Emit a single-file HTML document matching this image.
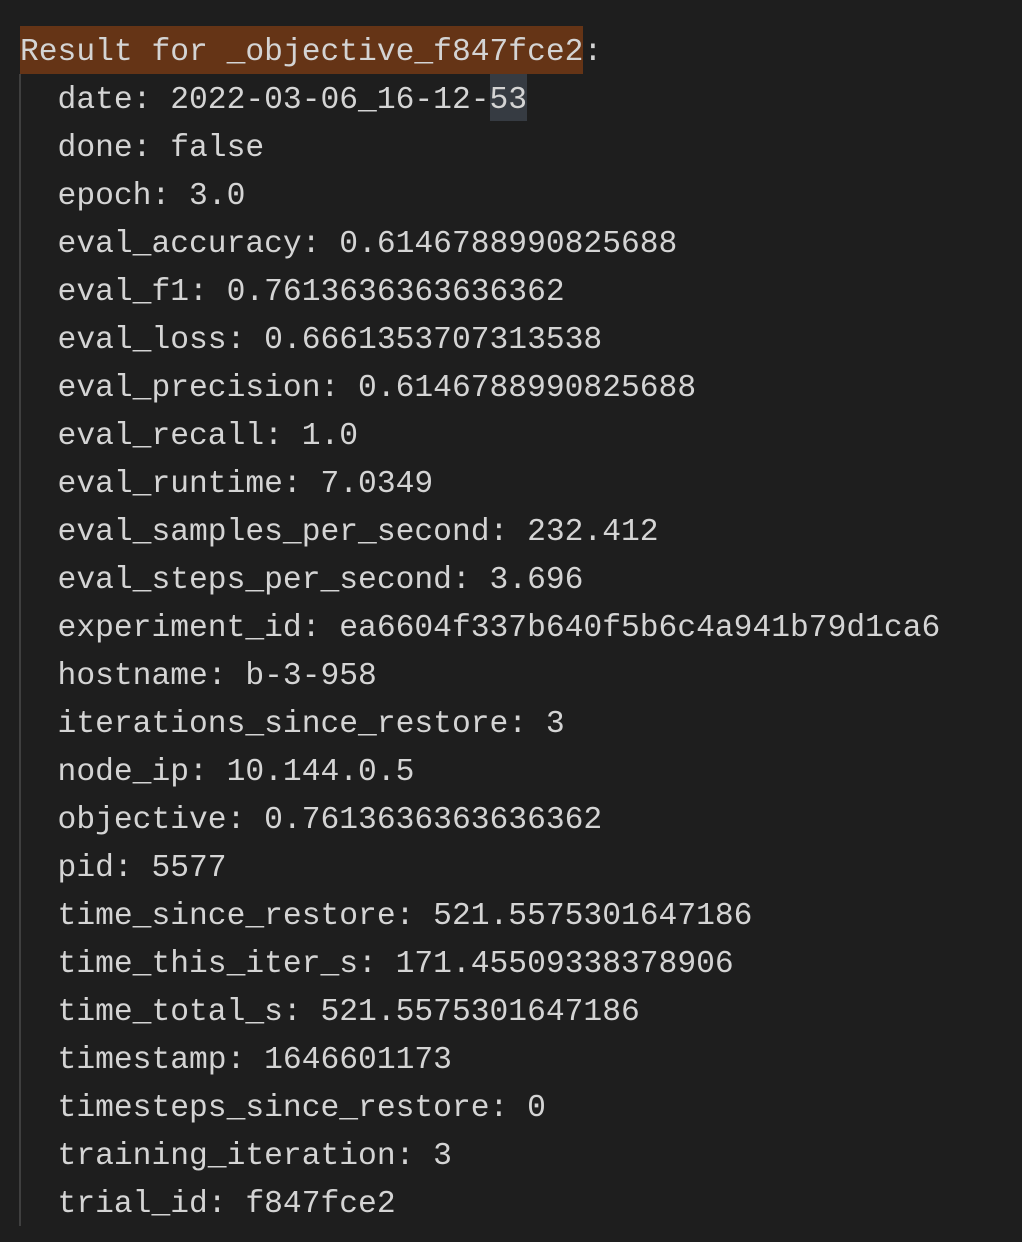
<!DOCTYPE html>
<html><head><style>
html,body{margin:0;padding:0;background:#1e1e1e;width:1022px;height:1242px;overflow:hidden}
.wrap{position:absolute;left:20px;top:26px;font-family:"Liberation Mono",monospace;font-size:31.3px;line-height:48px;color:#d4d4d4;white-space:pre}
.l{height:48px;overflow:visible}
.t{position:relative;top:3px}
.hl{background:#653416;display:inline-block;height:48px;vertical-align:top}
.sel{background:#363b42;display:inline-block;height:47px;vertical-align:top}
.bar{position:absolute;left:19px;top:74px;width:2px;height:1152px;background:#3f3f3f}
</style></head><body>
<div class="bar"></div>
<div class="wrap"><div class="l"><span class="hl"><span class="t">Result for _objective_f847fce2</span></span><span class="t">:</span></div><div class="l"><span class="t">  date: 2022-03-06_16-12-</span><span class="sel"><span class="t">53</span></span></div><div class="l t">  done: false</div><div class="l t">  epoch: 3.0</div><div class="l t">  eval_accuracy: 0.6146788990825688</div><div class="l t">  eval_f1: 0.7613636363636362</div><div class="l t">  eval_loss: 0.6661353707313538</div><div class="l t">  eval_precision: 0.6146788990825688</div><div class="l t">  eval_recall: 1.0</div><div class="l t">  eval_runtime: 7.0349</div><div class="l t">  eval_samples_per_second: 232.412</div><div class="l t">  eval_steps_per_second: 3.696</div><div class="l t">  experiment_id: ea6604f337b640f5b6c4a941b79d1ca6</div><div class="l t">  hostname: b-3-958</div><div class="l t">  iterations_since_restore: 3</div><div class="l t">  node_ip: 10.144.0.5</div><div class="l t">  objective: 0.7613636363636362</div><div class="l t">  pid: 5577</div><div class="l t">  time_since_restore: 521.5575301647186</div><div class="l t">  time_this_iter_s: 171.45509338378906</div><div class="l t">  time_total_s: 521.5575301647186</div><div class="l t">  timestamp: 1646601173</div><div class="l t">  timesteps_since_restore: 0</div><div class="l t">  training_iteration: 3</div><div class="l t">  trial_id: f847fce2</div></div>
</body></html>
